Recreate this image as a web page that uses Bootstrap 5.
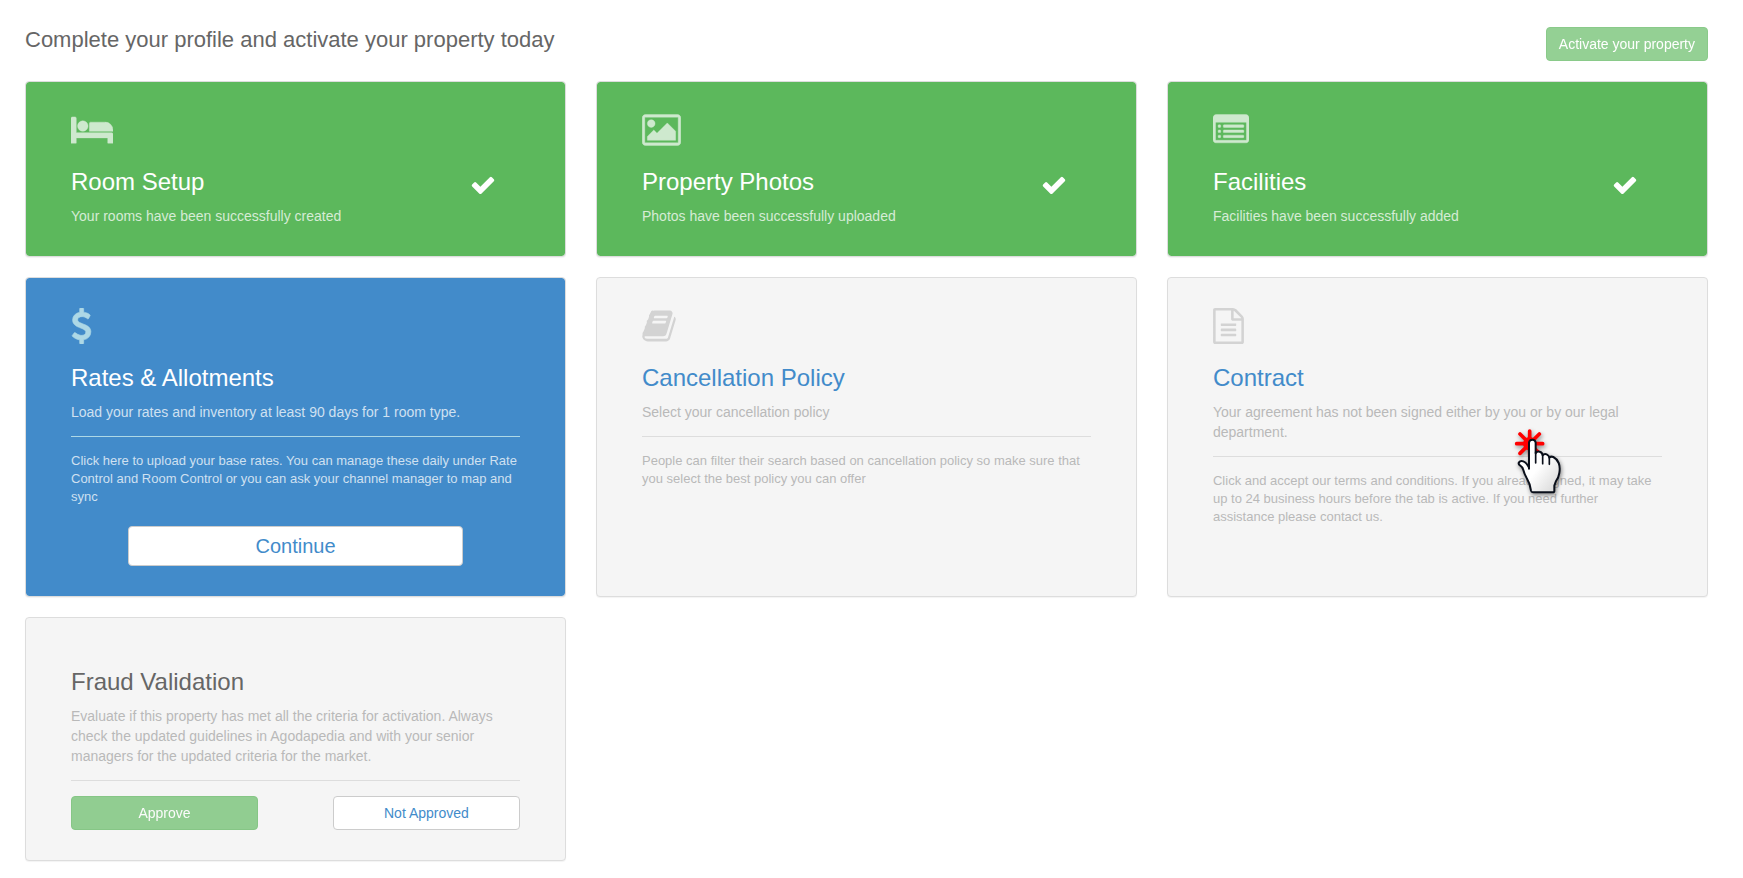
<!DOCTYPE html>
<html lang="en">
<head>
<meta charset="utf-8">
<meta name="viewport" content="width=device-width, initial-scale=1">
<title>Activate your property</title>
<link href="https://cdn.jsdelivr.net/npm/bootstrap@5.3.0/dist/css/bootstrap.min.css" rel="stylesheet">
<style>
  body { font-family: "Liberation Sans", Arial, sans-serif; font-size: 14px; line-height: 20px; color: #666; background: #fff; }
  .page { padding: 27px 35px 16px 25px; }
  .page-title { font-size: 22px; line-height: 26px; font-weight: 400; color: #666; }
  .page-head { margin-bottom: 20px; }
  .steps { --bs-gutter-x: 30px; --bs-gutter-y: 20px; }
  .step { --bs-card-border-color: #ddd; --bs-card-border-radius: 4px; --bs-card-bg: #f5f5f5; --bs-card-color: #b9b9b9; box-shadow: 0 1px 1px rgba(0,0,0,.05); background-clip: padding-box; }
  .step > .card-body { padding: 30px 45px; }
  .step-icon { height: 36px; fill: #d3d3d3; display: block; }
  .step-title { font-size: 24px; line-height: 26px; font-weight: 400; color: #428bca; margin: 21px 0 11px; }
  .step-title a { color: inherit; text-decoration: none; }
  .step-check { width: 26px; height: 26px; fill: #fff; margin: 24px 24px 0 0; }
  .step hr { margin: 14px 0 15px; border-top: 1px solid #ddd; opacity: 1; }
  .step-note { font-size: 13px; line-height: 18px; }
  .step-done { --bs-card-bg: #5cb85c; --bs-card-color: rgba(255,255,255,.75); }
  .step-done .step-icon { fill: #cee9ce; stroke: #cee9ce; stroke-width: 20; }
  .step-done .step-title, .step-current .step-title { color: #fff; }
  .step-current { --bs-card-bg: #428bca; --bs-card-color: rgba(255,255,255,.75); }
  .step-current .step-icon { fill: #add8e6; stroke: #add8e6; stroke-width: 30; }
  .step-current hr { border-color: #add8e6; }
  .step-review .step-title { color: #666; }
  .btn { --bs-btn-font-size: 14px; --bs-btn-line-height: 20px; --bs-btn-padding-x: 12px; --bs-btn-padding-y: 6px; --bs-btn-border-radius: 4px; }
  .btn-activate { --bs-btn-disabled-bg: #5cb85c; --bs-btn-disabled-border-color: #4cae4c; --bs-btn-disabled-color: #fff; --bs-btn-disabled-opacity: .65; }
  .btn-plain { --bs-btn-bg: #fff; --bs-btn-border-color: #ccc; --bs-btn-color: #428bca; --bs-btn-hover-bg: #ebebeb; --bs-btn-hover-border-color: #adadad; --bs-btn-hover-color: #428bca; }
  .btn-continue { --bs-btn-font-size: 20px; --bs-btn-line-height: 26px; }
  .continue-row { padding: 20px 57px 0; }
  .pointer { position: absolute; top: 151px; right: 144px; width: 48px; height: 66px; overflow: visible; pointer-events: none; filter: drop-shadow(1px 2px 2px rgba(0,0,0,.45)); }
</style>
</head>
<body>
<svg class="d-none" aria-hidden="true">
  <symbol id="i-check" viewBox="0 0 1792 1792"><path d="M1671 566q0 40-28 68l-724 724-136 136q-28 28-68 28t-68-28l-136-136-362-362q-28-28-28-68t28-68l136-136q28-28 68-28t68 28l294 295 656-657q28-28 68-28t68 28l136 136q28 28 28 68z"/></symbol>
</svg>
<main class="container-fluid page">
  <header class="page-head d-flex justify-content-between align-items-start">
    <h1 class="page-title mb-0">Complete your profile and activate your property today</h1>
    <button type="button" class="btn btn-activate" disabled>Activate your property</button>
  </header>

  <div class="row row-cols-1 row-cols-md-3 steps">
    <div class="col">
      <section class="card step step-done h-100"><div class="card-body">
        <svg class="step-icon" width="42" viewBox="0 0 2048 1792" preserveAspectRatio="xMinYMid slice" aria-hidden="true"><path d="M256 1024h1728q26 0 45 19t19 45v448h-256v-256H256v256H0V320q0-26 19-45t45-19h128q26 0 45 19t19 45zM832 704q0-106-75-181t-181-75-181 75-75 181 75 181 181 75 181-75 75-181zM2048 960v-64q0-159-112-272t-272-112H960q-26 0-45 19t-19 45v384z"/></svg>
        <div class="d-flex justify-content-between">
          <h2 class="step-title">Room Setup</h2>
          <svg class="step-check" role="img" aria-label="Done"><use href="#i-check"/></svg>
        </div>
        <p class="mb-0">Your rooms have been successfully created</p>
      </div></section>
    </div>

    <div class="col">
      <section class="card step step-done h-100"><div class="card-body">
        <svg class="step-icon" width="39" viewBox="-64 0 1920 1792" aria-hidden="true"><path d="M576 576q0 80-56 136t-136 56-136-56-56-136 56-136 136-56 136 56 56 136zm1024 384v448h-1408v-192l320-320 160 160 512-512zm96-704h-1600q-13 0-22.500 9.500t-9.500 22.500v1216q0 13 9.500 22.500t22.500 9.500h1600q13 0 22.500-9.500t9.500-22.500v-1216q0-13-9.500-22.500t-22.500-9.500zm160 32v1216q0 66-47 113t-113 47h-1600q-66 0-113-47t-47-113v-1216q0-66 47-113t113-47h1600q66 0 113 47t47 113z"/></svg>
        <div class="d-flex justify-content-between">
          <h2 class="step-title">Property Photos</h2>
          <svg class="step-check" role="img" aria-label="Done"><use href="#i-check"/></svg>
        </div>
        <p class="mb-0">Photos have been successfully uploaded</p>
      </div></section>
    </div>

    <div class="col">
      <section class="card step step-done h-100"><div class="card-body">
        <svg class="step-icon" width="36" viewBox="0 0 1792 1792" aria-hidden="true"><path fill-rule="evenodd" d="M160 128h1472q66 0 113 47t47 113v1088q0 66-47 113t-113 47H160q-66 0-113-47T0 1376V288q0-66 47-113t113-47zM160 512q-32 0-32 32v832q0 32 32 32h1472q32 0 32-32V544q0-32-32-32z"/><path d="M288 640h64q32 0 32 32v64q0 32-32 32h-64q-32 0-32-32v-64q0-32 32-32zm0 256h64q32 0 32 32v64q0 32-32 32h-64q-32 0-32-32v-64q0-32 32-32zm0 256h64q32 0 32 32v64q0 32-32 32h-64q-32 0-32-32v-64q0-32 32-32zM544 640h960q32 0 32 32v64q0 32-32 32H544q-32 0-32-32v-64q0-32 32-32zm0 256h960q32 0 32 32v64q0 32-32 32H544q-32 0-32-32v-64q0-32 32-32zm0 256h960q32 0 32 32v64q0 32-32 32H544q-32 0-32-32v-64q0-32 32-32z"/></svg>
        <div class="d-flex justify-content-between">
          <h2 class="step-title">Facilities</h2>
          <svg class="step-check" role="img" aria-label="Done"><use href="#i-check"/></svg>
        </div>
        <p class="mb-0">Facilities have been successfully added</p>
      </div></section>
    </div>

    <div class="col">
      <section class="card step step-current h-100"><div class="card-body">
        <svg class="step-icon" width="21" viewBox="384 0 1024 1792" aria-hidden="true"><path d="M1362 1185q0 153-99.500 263.500t-258.500 136.500v175q0 14-9 23t-23 9h-135q-13 0-22.500-9.500t-9.500-22.500v-175q-66-9-127.500-31t-101.500-44.500-74-48-46.500-37.500-17.500-18q-17-21-2-41l103-135q7-10 23-12 15-2 24 9l2 2q113 99 243 125 37 8 74 8 81 0 142.500-43t61.500-122q0-28-15-53t-33.500-42-58.500-37.500-66-32-80-32.500q-39-16-61.500-25t-61.500-26.500-62.500-31-56.500-35.500-53.500-42.500-43.500-49-35.500-58-21-66.500-8.500-78q0-138 98-242t255-134v-180q0-13 9.500-22.500t22.500-9.500h135q14 0 23 9t9 23v176q57 6 110.500 23t87 33.500 63.500 37.500 39 29 15 14q17 18 5 38l-81 146q-8 15-23 16-14 3-27-7-3-3-14.500-12t-39-26.500-58.500-32-74.500-26-85.500-11.500q-95 0-155 43t-60 111q0 26 8.500 48t29.500 41.500 39.500 33 56 31 60.500 27 70 27.500q53 20 81 31.500t76 35 75.500 42.500 62 50 53 63.500 31.500 76.500 13 94z"/></svg>
        <h2 class="step-title">Rates &amp; Allotments</h2>
        <p class="mb-0">Load your rates and inventory at least 90 days for 1 room type.</p>
        <hr>
        <p class="step-note mb-0">Click here to upload your base rates. You can manage these daily under Rate Control and Room Control or you can ask your channel manager to map and sync</p>
        <div class="continue-row d-grid"><button type="button" class="btn btn-plain btn-continue">Continue</button></div>
      </div></section>
    </div>

    <div class="col">
      <section class="card step h-100"><div class="card-body">
        <svg class="step-icon" width="34" viewBox="64 0 1664 1792" aria-hidden="true"><path d="M1703 478q40 57 18 129l-275 906q-19 64-76.500 107.500t-122.500 43.500h-923q-77 0-148.500-53.500t-99.500-131.500q-24-67-2-127 0-4 3-27t4-37q1-8-3-21.500t-3-19.500q2-11 8-21t16.500-23.500 16.500-23.500q23-38 45-91.500t30-91.500q3-10 .5-30t-.5-28q3-11 17-28t17-23q21-36 42-92t25-90q1-9-2.500-32t.5-28q4-13 22-30.500t22-22.500q19-26 42.500-84.500t27.500-96.500q1-8-3-25.500t-2-26.500q2-8 9-18t18-23 17-21q8-12 16.500-30.500t15-35 16-36 19.500-32 26.500-23.500 36-11.500 47.500 5.500l-1 3q38-9 51-9h761q74 0 114 56t18 130l-274 906q-36 119-71.500 153.500t-128.500 34.500h-869q-27 0-38 15-11 16-1 43 24 70 144 70h923q29 0 56-15.500t35-41.500l300-987q7-22 5-57 38 15 59 43zm-1064 2q-4 13 2 22.500t20 9.500h608q13 0 25.500-9.500t16.500-22.500l21-64q4-13-2-22.500t-20-9.500h-608q-13 0-25.500 9.500t-16.500 22.500zm-83 256q-4 13 2 22.500t20 9.500h608q13 0 25.500-9.500t16.500-22.500l21-64q4-13-2-22.500t-20-9.500h-608q-13 0-25.500 9.500t-16.500 22.500z"/></svg>
        <h2 class="step-title"><a href="#">Cancellation Policy</a></h2>
        <p class="mb-0">Select your cancellation policy</p>
        <hr>
        <p class="step-note mb-0">People can filter their search based on cancellation policy so make sure that you select the best policy you can offer</p>
      </div></section>
    </div>

    <div class="col">
      <section class="card step h-100"><div class="card-body">
        <svg class="step-icon" width="31" viewBox="128 0 1536 1792" aria-hidden="true"><path d="M1596 380q28 28 48 76t20 88v1152q0 40-28 68t-68 28h-1344q-40 0-68-28t-28-68v-1600q0-40 28-68t68-28h896q40 0 88 20t76 48zm-444-244v376h376q-10-29-22-41l-313-313q-12-12-41-22zm384 1528v-1024h-416q-40 0-68-28t-28-68v-416h-768v1536h1280zm-1024-864q0-14 9-23t23-9h704q14 0 23 9t9 23v64q0 14-9 23t-23 9h-704q-14 0-23-9t-9-23v-64zm736 224q14 0 23 9t9 23v64q0 14-9 23t-23 9h-704q-14 0-23-9t-9-23v-64q0-14 9-23t23-9h704zm0 256q14 0 23 9t9 23v64q0 14-9 23t-23 9h-704q-14 0-23-9t-9-23v-64q0-14 9-23t23-9h704z"/></svg>
        <h2 class="step-title"><a href="#">Contract</a></h2>
        <p class="mb-0">Your agreement has not been signed either by you or by our legal department.</p>
        <hr>
        <p class="step-note mb-0">Click and accept our terms and conditions. If you already signed, it may take up to 24 business hours before the tab is active. If you need further assistance please contact us.</p>
      </div>
      <svg class="pointer" viewBox="45 43 144 198" aria-hidden="true">
        <defs><linearGradient id="hand" x1="0" y1="0" x2="1" y2="1"><stop offset=".5" stop-color="#fff"/><stop offset="1" stop-color="#d4d4d4"/></linearGradient></defs>
        <g stroke="#f00" stroke-width="11" stroke-linecap="round"><path d="M89 49v76M50 87h78M60 58l58 58M118 58l-58 58"/></g>
        <circle cx="89" cy="87" r="20" fill="#f00"/>
        <path d="M87 162V84q1-9 10-9t10 9v32q4-7 12-5 8 2 9 11 5-6 12-3 7 3 8 10 5-5 12-2 10 5 16 18 5 12 2 30-2 14-10 24l-5 14v16q0 4-5 4H99q-5 0-6-5-3-22-13-38-7-12-10-24-3-10-10-14-6-4-3-9 4-6 13-3 10 4 17 19z" fill="url(#hand)" stroke="#0a0f1a" stroke-width="6" stroke-linejoin="round"/>
        <path d="M107 112v33M128 120v27M148 127v22" fill="none" stroke="#0a0f1a" stroke-width="5" stroke-linecap="round"/>
      </svg>
      </section>
    </div>

    <div class="col">
      <section class="card step step-review"><div class="card-body">
        <h2 class="step-title">Fraud Validation</h2>
        <p class="mb-0">Evaluate if this property has met all the criteria for activation. Always check the updated guidelines in Agodapedia and with your senior managers for the updated criteria for the market.</p>
        <hr>
        <div class="row g-0">
          <div class="col-5 d-grid"><button type="button" class="btn btn-activate" disabled>Approve</button></div>
          <div class="col-5 offset-2 d-grid"><button type="button" class="btn btn-plain">Not Approved</button></div>
        </div>
      </div></section>
    </div>
  </div>
</main>
<script src="https://cdn.jsdelivr.net/npm/bootstrap@5.3.0/dist/js/bootstrap.bundle.min.js"></script>
</body>
</html>
